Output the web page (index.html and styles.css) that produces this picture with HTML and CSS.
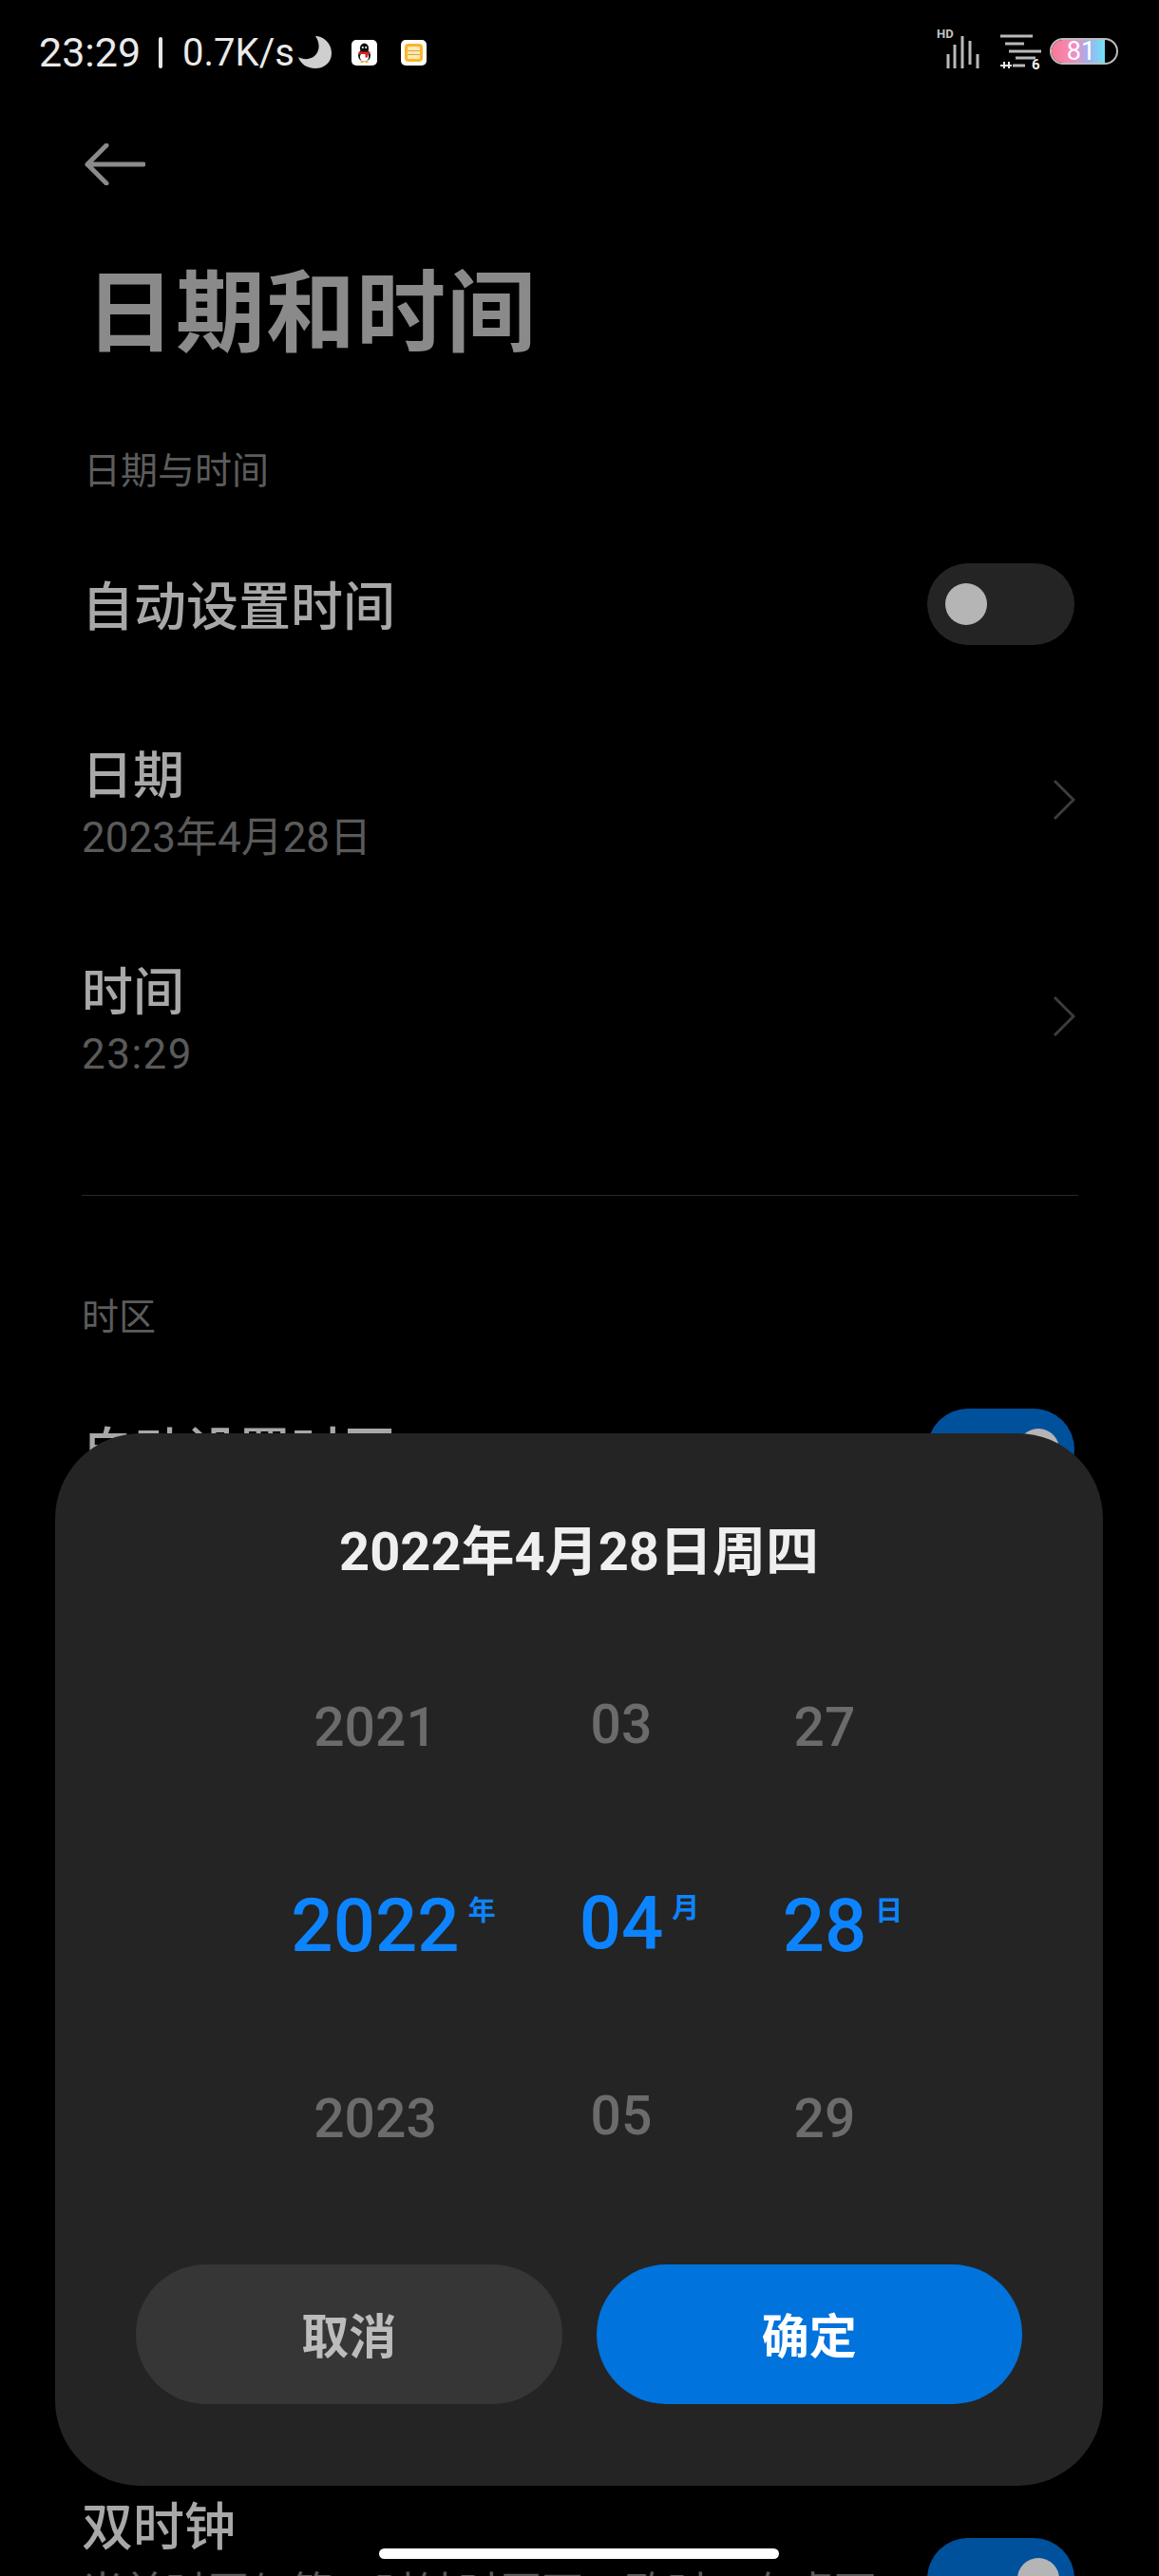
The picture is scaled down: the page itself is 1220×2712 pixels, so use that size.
FILE: index.html
```html
<!DOCTYPE html>
<html lang="zh-CN">
<head>
  <meta charset="UTF-8" />
  <meta name="viewport" content="width=device-width, initial-scale=1" />
  <title>日期和时间</title>
  <link rel="stylesheet" href="styles.css">
</head>
<body>
  <div class="screen">

    <div class="status-bar">
      <div class="status-left">
        <span class="clock">23:29</span>
        <span class="status-sep"></span>
        <span class="speed">0.7K/s</span>
        <svg class="moon" width="38" height="36" viewBox="0 0 38 36">
          <path d="M19 1 C27 1 36 8 36 19 C36 29 28 35 19 35 C10 35 3 30 1 23 C6 26 13 26 18 22 C24 17 24 8 19 1 Z" fill="#cfcfcf"/>
        </svg>
        <svg class="app-icon" width="27" height="27" viewBox="0 0 27 27">
          <rect width="27" height="27" rx="5" fill="#fff"/>
          <ellipse cx="13.5" cy="9" rx="4.6" ry="5.5" fill="#111"/>
          <ellipse cx="13.5" cy="16.5" rx="6.5" ry="6.5" fill="#111"/>
          <ellipse cx="13.5" cy="18" rx="4.6" ry="4.8" fill="#fff"/>
          <circle cx="11.8" cy="8" r="1" fill="#fff"/>
          <circle cx="15.2" cy="8" r="1" fill="#fff"/>
          <path d="M7.5 12.5 H19.5 V15 H17 V18.5 H14.5 V15 H7.5 Z" fill="#d8261c"/>
          <path d="M8.5 24 H13 L11 22 Z M14 24 H18.5 L16 22 Z" fill="#f2b21b"/>
        </svg>
        <svg class="app-icon note-icon" width="27" height="27" viewBox="0 0 27 27">
          <rect width="27" height="27" rx="5" fill="#fff"/>
          <rect x="4" y="4" width="19" height="19" rx="4" fill="#fbb62c"/>
          <rect x="7" y="7" width="13" height="13" rx="1.5" fill="#fde9b4"/>
          <path d="M7 11.5 H20 M7 15.5 H20" stroke="#d9a53a" stroke-width="1"/>
        </svg>
      </div>
      <div class="status-right">
        <svg class="signal" width="48" height="46" viewBox="0 0 48 46">
          <text x="0" y="12" class="hd">HD</text>
          <path d="M12 29 V44 M19 19 V44 M27 10 V44 M35 15 V40 M43 29 V44" stroke="#b9b9b9" stroke-width="3" fill="none"/>
        </svg>
        <svg class="wifi" width="46" height="42" viewBox="0 0 46 42">
          <path d="M1 2 H35 M6 10 H26 M10 18 H44 M17 25 H38 M14 33 H27" stroke="#b9b9b9" stroke-width="3" fill="none"/>
          <path d="M1 33 H13 M5 29 V36 M10 29 V36" stroke="#e6e6e6" stroke-width="2" fill="none"/>
          <text x="34" y="37" class="wifi-num">6</text>
        </svg>
        <div class="battery">
          <div class="battery-fill"></div>
          <span class="battery-num">81</span>
        </div>
      </div>
    </div>

    <div class="settings">
      <svg class="back" width="64" height="44" viewBox="0 0 64 44">
        <path d="M62 22 H3 M23 2 L3 22 L23 42" stroke="#8a8a8a" stroke-width="5" stroke-linecap="round" stroke-linejoin="round" fill="none"/>
      </svg>
      <h1 class="page-title">日期和时间</h1>

      <div class="section-label">日期与时间</div>
      <div class="row row-single">
        <div class="row-title title-single">自动设置时间</div>
        <div class="switch"></div>
      </div>
      <div class="row row-double row-first">
        <div>
          <div class="row-title">日期</div>
          <div class="row-sub">2023年4月28日</div>
        </div>
        <svg class="chevron" width="24" height="44" viewBox="0 0 24 44">
          <path d="M2 2 L22 22 L2 42" stroke="#3c3c3c" stroke-width="3" fill="none"/>
        </svg>
      </div>
      <div class="row row-double">
        <div>
          <div class="row-title">时间</div>
          <div class="row-sub row-sub-time">23:29</div>
        </div>
        <svg class="chevron" width="24" height="44" viewBox="0 0 24 44">
          <path d="M2 2 L22 22 L2 42" stroke="#3c3c3c" stroke-width="3" fill="none"/>
        </svg>
      </div>

      <div class="divider"></div>

      <div class="section-label section-zone">时区</div>
      <div class="row row-single row-zone">
        <div class="row-title title-single">自动设置时区</div>
        <div class="switch switch-on"></div>
      </div>
    </div>

    <div class="dual-clock">
      <div>
        <div class="row-title">双时钟</div>
        <div class="row-sub dual-sub">当前时区与第二时钟时区不一致时，在桌面</div>
      </div>
      <div class="switch switch-on"></div>
    </div>

    <div class="sheet">
      <div class="sheet-title">2022年4月28日周四</div>
      <div class="picker">
        <div class="picker-col col-year">
          <div class="cell">2021</div>
          <div class="cell cell-active"><span class="num">2022<span class="unit">年</span></span></div>
          <div class="cell">2023</div>
        </div>
        <div class="picker-col col-month">
          <div class="cell">03</div>
          <div class="cell cell-active"><span class="num">04<span class="unit">月</span></span></div>
          <div class="cell">05</div>
        </div>
        <div class="picker-col col-day">
          <div class="cell">27</div>
          <div class="cell cell-active"><span class="num">28<span class="unit">日</span></span></div>
          <div class="cell">29</div>
        </div>
      </div>
      <div class="sheet-buttons">
        <div class="btn btn-cancel">取消</div>
        <div class="btn btn-ok">确定</div>
      </div>
    </div>

    <div class="home-bar"></div>
  </div>
</body>
</html>
```

FILE: styles.css
```css
/* Reset and base */
* {
  box-sizing: border-box;
}
body {
  margin: 0;
  background: #000;
  font-family: Roboto, "Noto Sans CJK SC", sans-serif;
}
.screen {
  position: relative;
  width: 1220px;
  height: 2712px;
  overflow: hidden;
  background: #000;
}

/* Status bar */
.status-bar {
  display: flex;
  justify-content: space-between;
  align-items: center;
  height: 110px;
  padding: 0 43px 0 41px;
}
.status-left {
  display: flex;
  align-items: center;
  color: #eaeaea;
  font-size: 43px;
}
.speed {
  font-size: 40px;
}
.status-sep {
  width: 4px;
  height: 33px;
  margin: 0 21px 0 19px;
  background: #e6e6e6;
  border-radius: 2px;
}
.moon {
  margin-left: 3px;
}
.app-icon {
  margin-left: 19px;
}
.note-icon {
  margin-left: 25px;
}
.status-right {
  display: flex;
  align-items: flex-end;
  margin-top: -8px;
}
.hd {
  font-size: 13px;
  font-weight: 700;
  fill: #c4c4c4;
}
.wifi {
  margin: 0 0 -4px 18px;
}
.wifi-num {
  font-size: 15px;
  font-weight: 700;
  fill: #eee;
}
.battery {
  position: relative;
  width: 72px;
  height: 28px;
  margin: 0 0 6px 7px;
  border: 2px solid #bdbdbd;
  border-radius: 14px;
}
.battery-fill {
  width: 82%;
  height: 100%;
  border-radius: 12px 0 0 12px;
  background: linear-gradient(90deg, #f97a93 0%, #f58bbd 40%, #9bb2f0 70%, #6fe3f5 100%);
}
.battery-num {
  position: absolute;
  top: 0;
  left: 0;
  width: 62px;
  text-align: center;
  color: #fff;
  font-size: 27px;
  line-height: 24px;
}

/* Settings list behind the sheet */
.settings {
  padding: 0 85px 0 86px;
}
.back {
  display: block;
  margin: 41px 0 0 3px;
}
.page-title {
  margin: 76px 0 0 4px;
  height: 200px;
  color: #8a8a8a;
  font-size: 94px;
  line-height: 120px;
  font-weight: 700;
  letter-spacing: 1px;
}
.section-label {
  margin: 0 0 0 2px;
  color: #5c5c5c;
  font-size: 39px;
  line-height: 50px;
}
.row {
  display: flex;
  justify-content: space-between;
  align-items: center;
}
.row-single {
  height: 136px;
  margin-top: 47px;
}
.row-double {
  height: 228px;
}
.row-first {
  margin-top: 32px;
}
.row-title {
  color: #a8a8a8;
  font-size: 54px;
  line-height: 64px;
  font-weight: 500;
}
.title-single {
  padding-top: 6px;
  font-size: 55px;
}
.row-sub {
  color: #5a5a5a;
  font-size: 44px;
  line-height: 64px;
}
.row-sub-time {
  letter-spacing: 1.5px;
}
.chevron {
  margin: 0 3px 16px 0;
}
.switch {
  position: relative;
  width: 155px;
  height: 86px;
  margin-right: 4px;
  border-radius: 43px;
  background: #242424;
}
.switch::after {
  content: "";
  position: absolute;
  top: 21px;
  left: 19px;
  width: 44px;
  height: 44px;
  border-radius: 50%;
  background: #b5b5b5;
}
.switch-on {
  background: #00519c;
}
.switch-on::after {
  left: auto;
  right: 16px;
}
.divider {
  height: 1px;
  margin-top: 66px;
  background: #262626;
}
.section-zone {
  margin: 103px 0 0 0;
}
.row-zone {
  margin-top: 46px;
}

/* Row poking out under the sheet */
.dual-clock {
  position: absolute;
  top: 2630px;
  left: 86px;
  right: 85px;
  display: flex;
  justify-content: space-between;
}
.dual-clock .switch {
  margin-top: 42px;
}
.dual-sub {
  margin-top: 4px;
  white-space: nowrap;
}

/* Date picker sheet */
.sheet {
  position: absolute;
  top: 1509px;
  left: 58px;
  width: 1103px;
  height: 1108px;
  padding: 0 85px;
  border-radius: 90px;
  background: #242424;
}
.sheet-title {
  margin-top: 93px;
  height: 64px;
  text-align: center;
  color: #efefef;
  font-size: 56px;
  line-height: 64px;
  font-weight: 700;
}
.picker {
  display: flex;
  margin: 49px 0 0 122px;
}
.picker-col {
  display: flex;
  flex-direction: column;
}
.col-year {
  width: 260px;
}
.col-month {
  width: 258px;
  margin-top: -3px;
}
.col-day {
  width: 170px;
}
.cell {
  height: 206px;
  display: flex;
  justify-content: center;
  align-items: center;
  color: #6b6b6b;
  font-size: 57px;
  font-weight: 500;
}
.cell-active {
  padding-top: 6px;
  color: #0d84ff;
  font-size: 78px;
}
.num {
  position: relative;
}
.unit {
  position: absolute;
  left: 100%;
  top: 12px;
  margin-left: 9px;
  font-size: 29px;
  line-height: 36px;
  font-weight: 700;
  white-space: nowrap;
}
.sheet-buttons {
  position: absolute;
  left: 85px;
  right: 85px;
  bottom: 86px;
  display: flex;
  gap: 36px;
}
.btn {
  flex: 1;
  height: 147px;
  padding-bottom: 4px;
  border-radius: 74px;
  display: flex;
  justify-content: center;
  align-items: center;
  font-size: 50px;
  font-weight: 700;
}
.btn-cancel {
  background: #363636;
  color: #bcbcbc;
}
.btn-ok {
  background: #0073dd;
  color: #fff;
}

/* Gesture bar */
.home-bar {
  position: absolute;
  top: 2683px;
  left: 399px;
  width: 421px;
  height: 11px;
  border-radius: 6px;
  background: #fff;
}
```
